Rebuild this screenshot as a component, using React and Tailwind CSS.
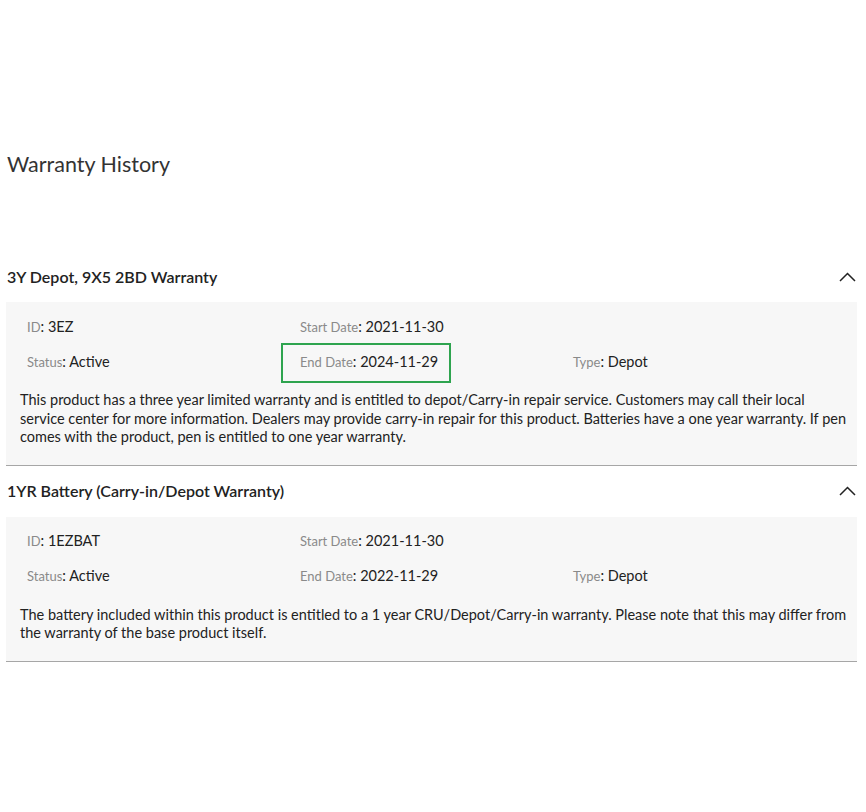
const warranties = [
  {
    title: "3Y Depot, 9X5 2BD Warranty",
    id: "3EZ",
    start: "2021-11-30",
    end: "2024-11-29",
    status: "Active",
    type: "Depot",
    highlightEnd: true,
    desc: "This product has a three year limited warranty and is entitled to depot/Carry-in repair service. Customers may call their local service center for more information. Dealers may provide carry-in repair for this product. Batteries have a one year warranty. If pen comes with the product, pen is entitled to one year warranty.",
  },
  {
    title: "1YR Battery (Carry-in/Depot Warranty)",
    id: "1EZBAT",
    start: "2021-11-30",
    end: "2022-11-29",
    status: "Active",
    type: "Depot",
    desc: "The battery included within this product is entitled to a 1 year CRU/Depot/Carry-in warranty. Please note that this may differ from the warranty of the base product itself.",
  },
];

function Chevron() {
  return (
    <svg width="17" height="10" viewBox="0 0 17 10" fill="none" className="mr-[1px]">
      <path d="M1 9 L8.5 1.5 L16 9" stroke="#222" strokeWidth="1.5" />
    </svg>
  );
}

function Field({ label, value, boxed }) {
  return (
    <div className="relative flex h-[35px] items-center">
      <div className="flex items-baseline">
        <span className="text-[13px] text-[#8a8a8a]">{label}</span>
        <span className="text-[14.5px] text-[#222]">: {value}</span>
      </div>
      {boxed && (
        <div className="pointer-events-none absolute left-[-19px] top-[-1px] h-[40px] w-[170px] border-2 border-[#2ea44f]" />
      )}
    </div>
  );
}

function WarrantyItem({ w }) {
  return (
    <div>
      <div className="flex h-[51px] items-center justify-between pl-[1px]">
        <h3 className="text-[16px] font-semibold text-[#222]">{w.title}</h3>
        <Chevron />
      </div>
      <div className="border-b border-[#a6a6a6] bg-[#f7f7f7] pl-[14px] pr-[8px] pt-[7px] pb-[18px]">
        <div className="grid grid-cols-[273px_273px_1fr] pl-[7px]">
          <Field label="ID" value={w.id} />
          <Field label="Start Date" value={w.start} />
          <div />
          <Field label="Status" value={w.status} />
          <Field label="End Date" value={w.end} boxed={w.highlightEnd} />
          <Field label="Type" value={w.type} />
        </div>
        <p className="mt-[12px] text-[14.5px] leading-[18.5px] text-[#222]">{w.desc}</p>
      </div>
    </div>
  );
}

export default function App() {
  return (
    <div
      className="min-h-[812px] bg-white pl-[6px] pr-[9px]"
      style={{ fontFamily: "Lato, 'Open Sans', sans-serif" }}
    >
      <h2 className="pt-[150px] pl-[1px] text-[21.5px] leading-[28px] text-[#333]">
        Warranty History
      </h2>
      <div className="mt-[73px]">
        {warranties.map((w) => (
          <WarrantyItem key={w.id} w={w} />
        ))}
      </div>
    </div>
  );
}
